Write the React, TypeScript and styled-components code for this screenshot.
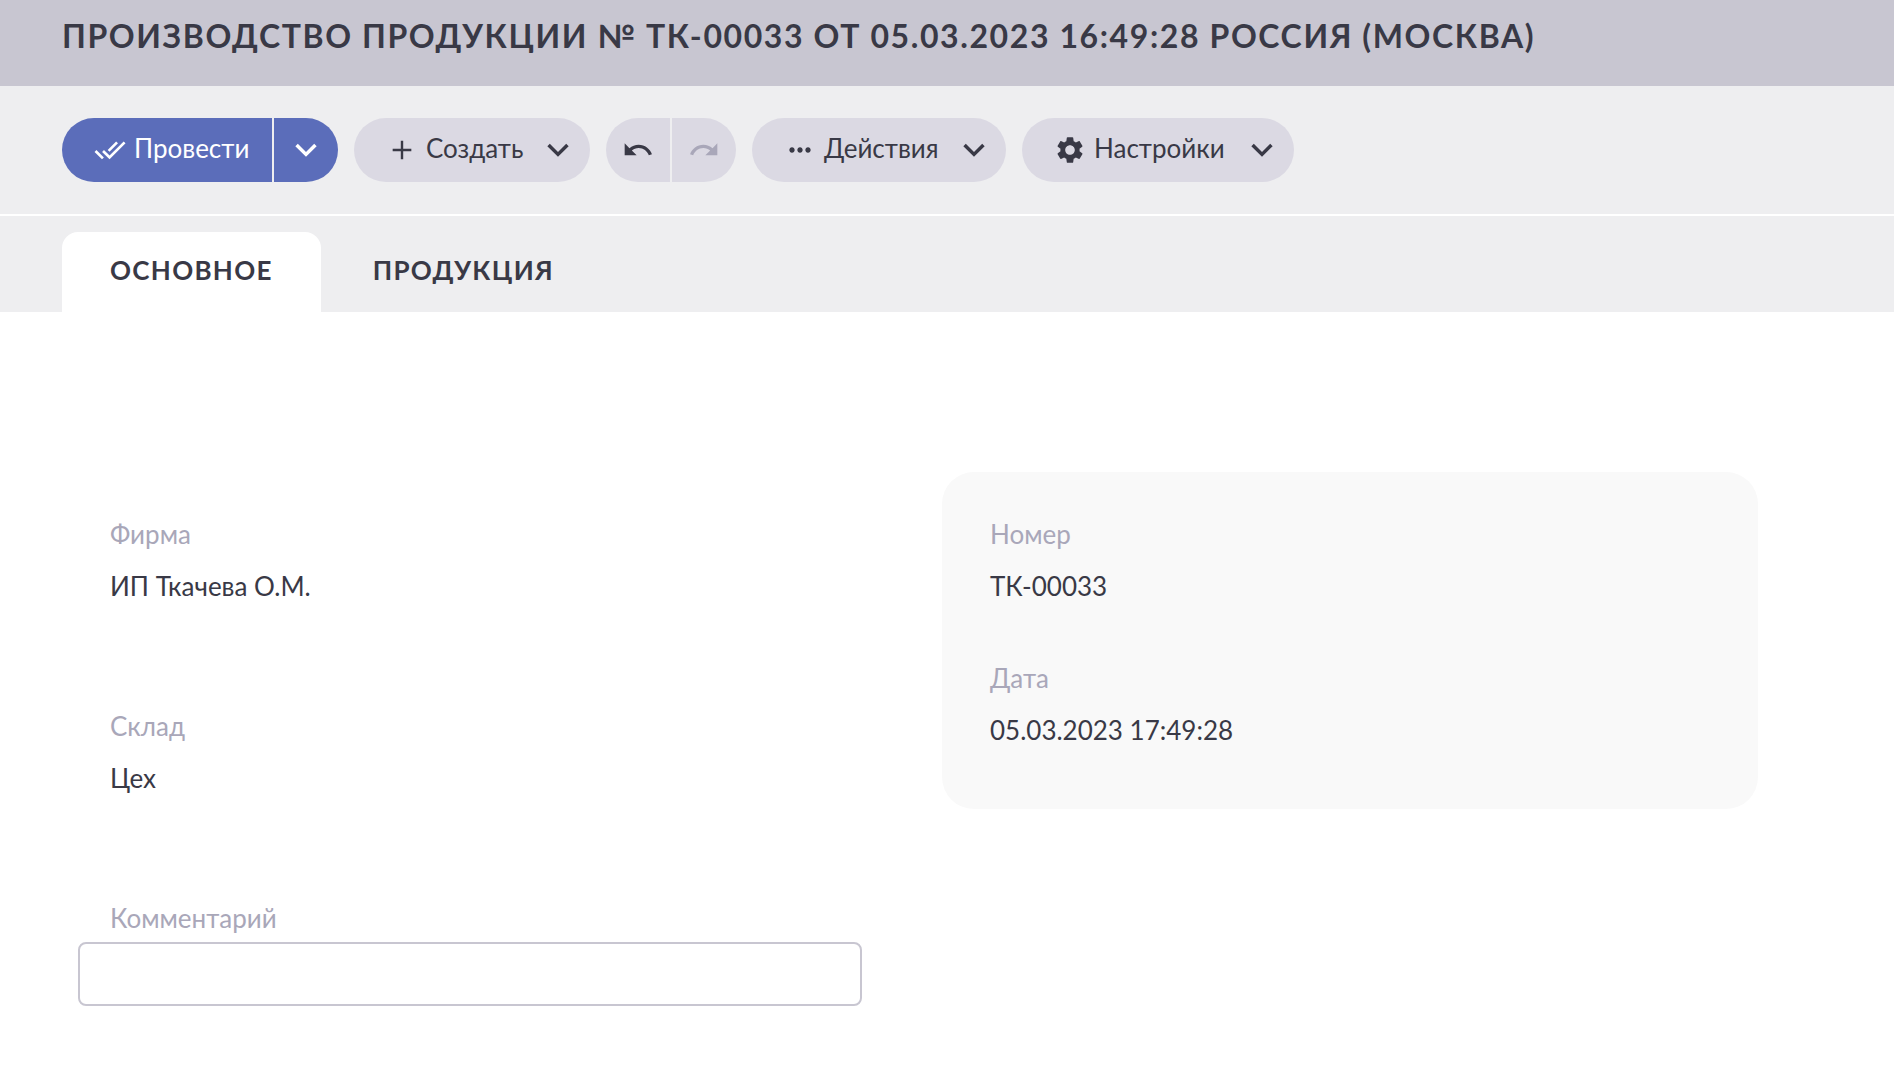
import React, { useState } from "react";
import styled, { createGlobalStyle } from "styled-components";

const color = {
  ink: "#393946",
  header: "#c8c6d1",
  bar: "#eeeef0",
  button: "#dbd9e3",
  primary: "#5b6dba",
  muted: "#a9a7b9",
  card: "#f9f9f9",
};

const capsTracking = "0.05em";

const GlobalStyle = createGlobalStyle`
  *, *::before, *::after { box-sizing: border-box; }
  body {
    margin: 0;
    background: #fff;
    color: ${color.ink};
    font-family: Lato, "Open Sans", sans-serif;
    font-size: 26px;
    line-height: 32px;
  }
  button, input { font: inherit; color: inherit; }
`;

const Header = styled.header`
  padding: 16px 62px 30px;
  background: ${color.header};
`;

const Title = styled.h1`
  margin: 0;
  font-size: 32px;
  line-height: 40px;
  font-weight: 700;
  letter-spacing: ${capsTracking};
  text-transform: uppercase;
`;

const Toolbar = styled.div`
  display: flex;
  flex-wrap: wrap;
  gap: 16px;
  padding: 32px 62px;
  background: ${color.bar};
  border-bottom: 2px solid #fff;
`;

const ButtonGroup = styled.div`
  display: flex;
  gap: 2px;
  border-radius: 32px;
  overflow: hidden;
`;

const Button = styled.button<{ $primary?: boolean; $minWidth?: number }>`
  display: flex;
  align-items: center;
  gap: 8px;
  height: 64px;
  min-width: ${(p) => p.$minWidth ?? 0}px;
  padding: 0 16px 0 32px;
  border: 0;
  background: ${(p) => (p.$primary ? color.primary : color.button)};
  color: ${(p) => (p.$primary ? "#fff" : color.ink)};
  cursor: pointer;
  white-space: nowrap;
`;

const ButtonText = styled.span`
  padding-bottom: 4px;
`;

const MenuButton = styled(Button)`
  justify-content: space-between;
  border-radius: 32px;

  ${ButtonText} { flex: 1; text-align: left; }
`;

const IconButton = styled(Button)`
  justify-content: center;
  width: 64px;
  padding: 0;

  &:disabled { color: ${color.muted}; cursor: default; }
`;

const IconSvg = styled.svg`
  flex: none;
  width: 32px;
  height: 32px;
  fill: currentColor;
`;

const Tabs = styled.div`
  display: flex;
  gap: 4px;
  padding: 16px 62px 0;
  background: ${color.bar};
`;

const Tab = styled.button`
  height: 80px;
  padding: 0 48px 4px;
  border: 0;
  border-radius: 16px 16px 0 0;
  background: transparent;
  font-weight: 700;
  letter-spacing: ${capsTracking};
  text-transform: uppercase;
  cursor: pointer;

  &[aria-selected="true"] { background: #fff; }
`;

const Content = styled.main`
  display: grid;
  grid-template-columns: 1fr 1fr;
  align-items: start;
  gap: 64px;
  padding: 160px 136px 64px 62px;
`;

const Column = styled.div`
  display: flex;
  flex-direction: column;
  gap: 108px;
  padding-top: 46px;
`;

const Card = styled.section`
  padding: 46px 48px 63px;
  border-radius: 32px;
  background: ${color.card};
`;

const FieldList = styled.dl<{ $gap: number; $inset?: boolean }>`
  display: flex;
  flex-direction: column;
  gap: ${(p) => p.$gap}px;
  margin: 0;
  padding: 0 ${(p) => (p.$inset ? 48 : 0)}px;
`;

const Field = styled.div`
  display: flex;
  flex-direction: column;
  gap: 20px;
`;

const Name = styled.dt`
  color: ${color.muted};
`;

const Value = styled.dd`
  margin: 0;
`;

const CommentField = styled.div`
  display: flex;
  flex-direction: column;
  gap: 8px;
  padding: 0 16px;
`;

const CommentLabel = styled.label`
  padding-left: 32px;
  color: ${color.muted};
`;

const CommentInput = styled.input`
  width: 100%;
  height: 64px;
  padding: 0 30px;
  border: 2px solid ${color.header};
  border-radius: 8px;
  background: #fff;
  outline: 0;

  &:focus { border-color: ${color.primary}; }
`;

const paths = {
  check:
    "M18 7l-1.41-1.41-6.34 6.34 1.41 1.41L18 7zm4.24-1.41L11.66 16.17 7.48 12l-1.41 1.41L11.66 19l12-12-1.42-1.41zM.41 13.41L6 19l1.41-1.41L1.83 12 .41 13.41z",
  plus: "M19 12.9h-6.1V19h-1.8v-6.1H5v-1.8h6.1V5h1.8v6.1H19z",
  undo:
    "M12.5 8c-2.65 0-5.05.99-6.9 2.6L2 7v9h9l-3.62-3.62c1.39-1.16 3.16-1.88 5.12-1.88 3.54 0 6.55 2.31 7.6 5.5l2.37-.78C21.08 11.03 17.15 8 12.5 8z",
  redo:
    "M18.4 10.6C16.55 8.99 14.15 8 11.5 8c-4.65 0-8.58 3.03-9.96 7.22L3.9 16c1.05-3.19 4.05-5.5 7.6-5.5 1.95 0 3.73.72 5.12 1.88L13 16h9V7l-3.6 3.6z",
  dots:
    "M6 10c-1.1 0-2 .9-2 2s.9 2 2 2 2-.9 2-2-.9-2-2-2zm12 0c-1.1 0-2 .9-2 2s.9 2 2 2 2-.9 2-2-.9-2-2-2zm-6 0c-1.1 0-2 .9-2 2s.9 2 2 2 2-.9 2-2-.9-2-2-2z",
  gear:
    "M19.14 12.94c.04-.3.06-.61.06-.94 0-.32-.02-.64-.07-.94l2.03-1.58c.18-.14.23-.41.12-.61l-1.92-3.32c-.12-.22-.37-.29-.59-.22l-2.39.96c-.5-.38-1.03-.7-1.62-.94l-.36-2.54c-.04-.24-.24-.41-.48-.41h-3.84c-.24 0-.43.17-.47.41l-.36 2.54c-.59.24-1.13.57-1.62.94l-2.39-.96c-.22-.08-.47 0-.59.22L2.74 8.87c-.12.21-.08.47.12.61l2.03 1.58c-.05.3-.09.63-.09.94s.02.64.07.94l-2.03 1.58c-.18.14-.23.41-.12.61l1.92 3.32c.12.22.37.29.59.22l2.39-.96c.5.38 1.03.7 1.62.94l.36 2.54c.05.24.24.41.48.41h3.84c.24 0 .44-.17.47-.41l.36-2.54c.59-.24 1.13-.56 1.62-.94l2.39.96c.22.08.47 0 .59-.22l1.92-3.32c.12-.22.07-.47-.12-.61l-2.01-1.58zM12 15.6c-1.98 0-3.6-1.62-3.6-3.6s1.62-3.6 3.6-3.6 3.6 1.62 3.6 3.6-1.62 3.6-3.6 3.6z",
  chevron: "M18.15 7.3L12 13.42 5.85 7.3 4 9.15l8 8 8-8z",
};

const Icon = ({ name }: { name: keyof typeof paths }) => (
  <IconSvg viewBox="0 0 24 24" aria-hidden="true">
    <path d={paths[name]} />
  </IconSvg>
);

const tabs = ["Основное", "Продукция"];

export default function App() {
  const [active, setActive] = useState(tabs[0]);
  const [comment, setComment] = useState("");

  return (
    <>
      <GlobalStyle />
      <Header>
        <Title>Производство продукции № ТК-00033 от 05.03.2023 16:49:28 Россия (Москва)</Title>
      </Header>
      <Toolbar role="toolbar">
        <ButtonGroup>
          <Button type="button" $primary $minWidth={210}>
            <Icon name="check" />
            <ButtonText>Провести</ButtonText>
          </Button>
          <IconButton type="button" $primary aria-haspopup="menu">
            <Icon name="chevron" />
          </IconButton>
        </ButtonGroup>
        <MenuButton type="button" aria-haspopup="menu" $minWidth={236}>
          <Icon name="plus" />
          <ButtonText>Создать</ButtonText>
          <Icon name="chevron" />
        </MenuButton>
        <ButtonGroup>
          <IconButton type="button">
            <Icon name="undo" />
          </IconButton>
          <IconButton type="button" disabled>
            <Icon name="redo" />
          </IconButton>
        </ButtonGroup>
        <MenuButton type="button" aria-haspopup="menu" $minWidth={254}>
          <Icon name="dots" />
          <ButtonText>Действия</ButtonText>
          <Icon name="chevron" />
        </MenuButton>
        <MenuButton type="button" aria-haspopup="menu" $minWidth={272}>
          <Icon name="gear" />
          <ButtonText>Настройки</ButtonText>
          <Icon name="chevron" />
        </MenuButton>
      </Toolbar>
      <Tabs role="tablist">
        {tabs.map((tab) => (
          <Tab
            key={tab}
            type="button"
            role="tab"
            aria-selected={tab === active}
            onClick={() => setActive(tab)}
          >
            {tab}
          </Tab>
        ))}
      </Tabs>
      <Content>
        <Column>
          <FieldList $gap={108} $inset>
            <Field>
              <Name>Фирма</Name>
              <Value>ИП Ткачева О.М.</Value>
            </Field>
            <Field>
              <Name>Склад</Name>
              <Value>Цех</Value>
            </Field>
          </FieldList>
          <CommentField>
            <CommentLabel htmlFor="comment">Комментарий</CommentLabel>
            <CommentInput
              id="comment"
              type="text"
              value={comment}
              onChange={(e) => setComment(e.target.value)}
            />
          </CommentField>
        </Column>
        <Card>
          <FieldList $gap={60}>
            <Field>
              <Name>Номер</Name>
              <Value>ТК-00033</Value>
            </Field>
            <Field>
              <Name>Дата</Name>
              <Value>05.03.2023 17:49:28</Value>
            </Field>
          </FieldList>
        </Card>
      </Content>
    </>
  );
}
